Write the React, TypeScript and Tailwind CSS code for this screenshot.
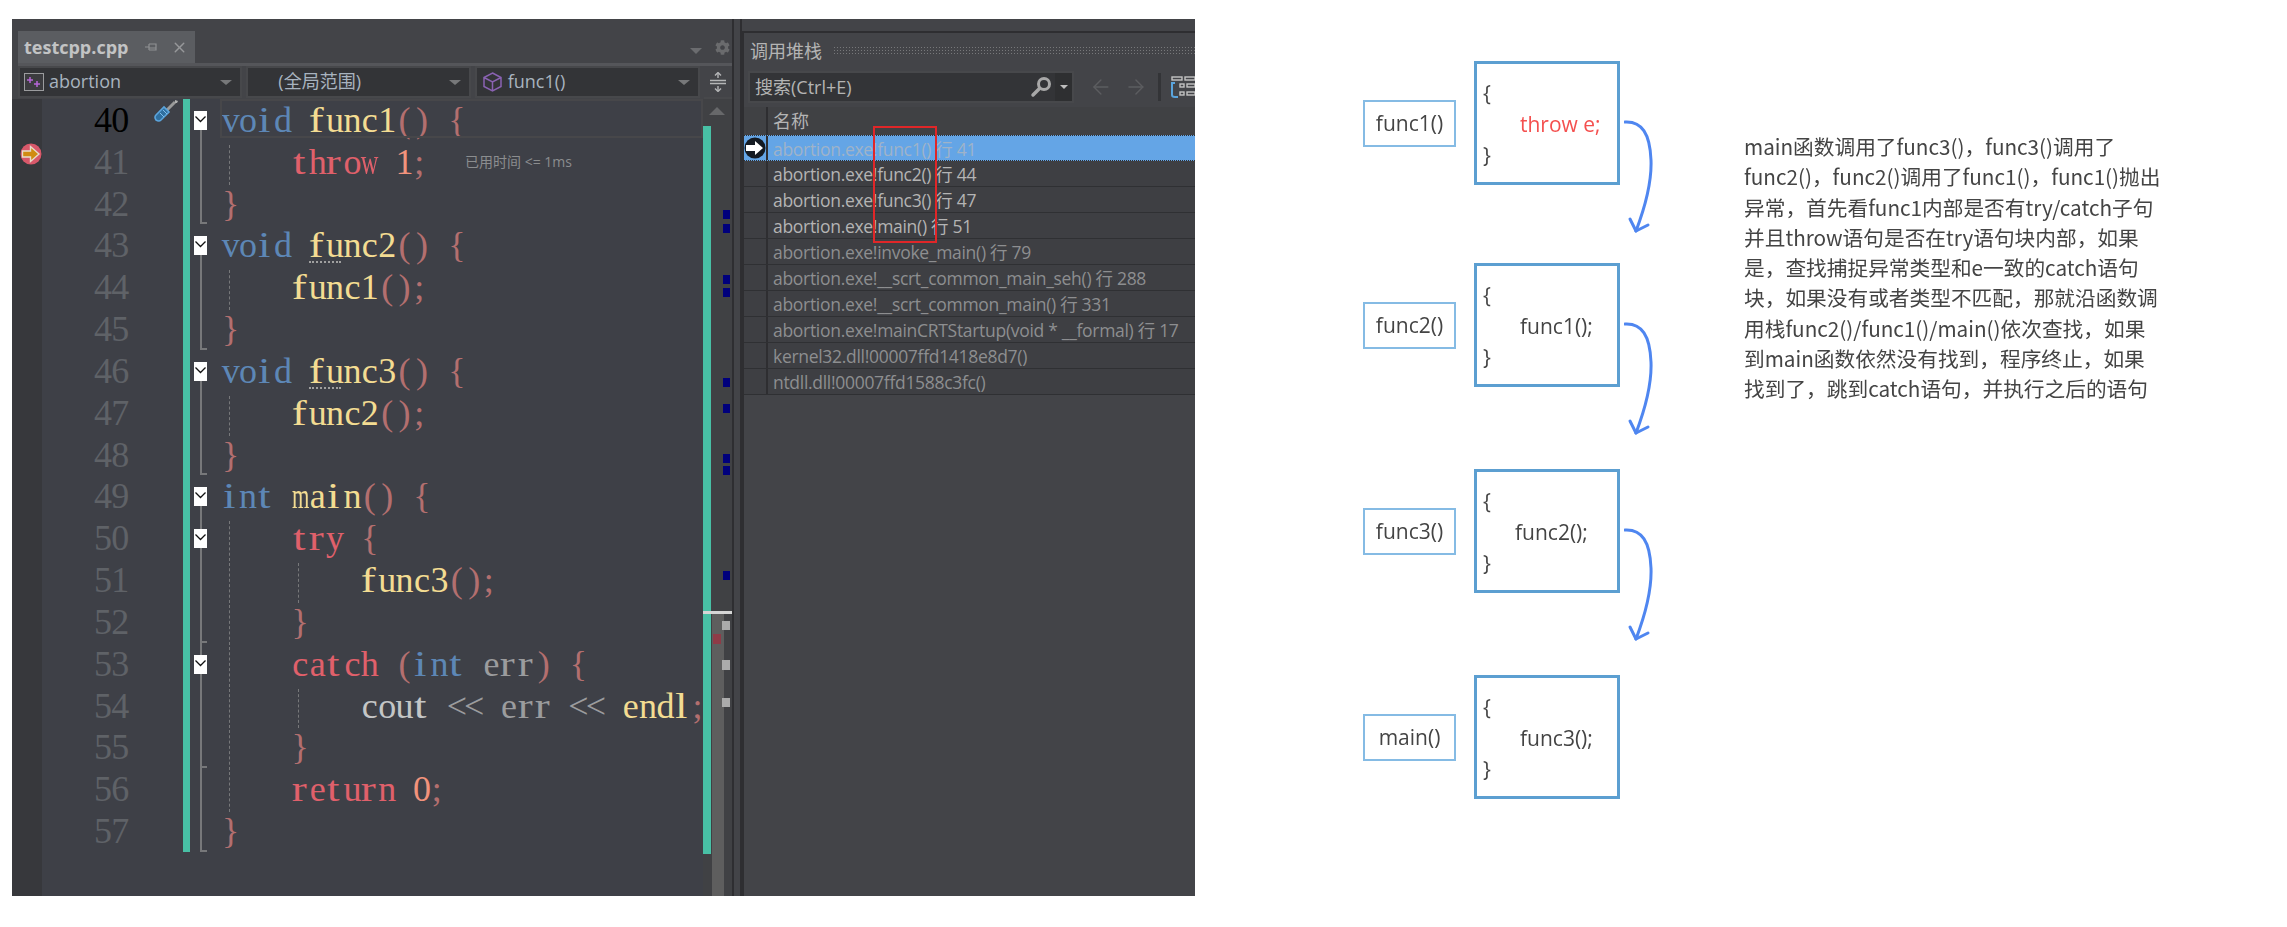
import { ArrowLeft, ArrowRight, X } from 'lucide-react'
import { FaCog } from 'react-icons/fa'

type Token = [string, string]
type Fold = 'open' | 'cont' | 'line' | 'tick' | 'end' | 'none'

const KW = 'text-[#5d87b6]'
const FN = 'text-[#f3dc92]'
const CTL = 'text-[#e0606b]'
const PUN = 'text-[#b36f6f]'
const NUM = 'text-[#f2937c]'
const VAR = 'text-[#9b9c9e]'
const STD = 'text-[#c4c6c6]'

const lines: { n: number; fold: Fold; tokens: Token[]; guides?: number[]; dots?: boolean }[] = [
  { n: 40, fold: 'open', dots: true, tokens: [['void ', KW], ['func1', FN], ['() {', PUN]] },
  { n: 41, fold: 'line', guides: [19], tokens: [['    ', VAR], ['throw ', CTL], ['1', NUM], [';', PUN]] },
  { n: 42, fold: 'end', tokens: [['}', PUN]] },
  { n: 43, fold: 'open', dots: true, tokens: [['void ', KW], ['func2', FN], ['() {', PUN]] },
  { n: 44, fold: 'line', guides: [19], tokens: [['    ', VAR], ['func1', FN], ['();', PUN]] },
  { n: 45, fold: 'end', tokens: [['}', PUN]] },
  { n: 46, fold: 'open', dots: true, tokens: [['void ', KW], ['func3', FN], ['() {', PUN]] },
  { n: 47, fold: 'line', guides: [19], tokens: [['    ', VAR], ['func2', FN], ['();', PUN]] },
  { n: 48, fold: 'end', tokens: [['}', PUN]] },
  { n: 49, fold: 'open', tokens: [['int ', KW], ['main', FN], ['() {', PUN]] },
  { n: 50, fold: 'cont', guides: [19], tokens: [['    ', VAR], ['try ', CTL], ['{', PUN]] },
  { n: 51, fold: 'line', guides: [19, 88], tokens: [['        ', VAR], ['func3', FN], ['();', PUN]] },
  { n: 52, fold: 'tick', guides: [19], tokens: [['    ', VAR], ['}', PUN]] },
  { n: 53, fold: 'cont', guides: [19], tokens: [['    ', VAR], ['catch ', CTL], ['(', PUN], ['int ', KW], ['err', VAR], [') {', PUN]] },
  { n: 54, fold: 'line', guides: [19, 88], tokens: [['        ', VAR], ['cout ', STD], ['<< ', VAR], ['err ', VAR], ['<< ', VAR], ['endl', FN], [';', PUN]] },
  { n: 55, fold: 'tick', guides: [19], tokens: [['    ', VAR], ['}', PUN]] },
  { n: 56, fold: 'line', guides: [19], tokens: [['    ', VAR], ['return ', CTL], ['0', NUM], [';', PUN]] },
  { n: 57, fold: 'end', tokens: [['}', PUN]] },
]

const stack = [
  'abortion.exe!func1() 行 41',
  'abortion.exe!func2() 行 44',
  'abortion.exe!func3() 行 47',
  'abortion.exe!main() 行 51',
  'abortion.exe!invoke_main() 行 79',
  'abortion.exe!__scrt_common_main_seh() 行 288',
  'abortion.exe!__scrt_common_main() 行 331',
  'abortion.exe!mainCRTStartup(void * __formal) 行 17',
  'kernel32.dll!00007ffd1418e8d7()',
  'ntdll.dll!00007ffd1588c3fc()',
]

const blueMarks = ['mt-[111px]', 'mt-[5px]', 'mt-[42px]', 'mt-[4px]', 'mt-[81px]', 'mt-[17px]', 'mt-[41px]', 'mt-[3px]', 'mt-[96px]']

const notes = [
  'main函数调用了func3()，func3()调用了',
  'func2()，func2()调用了func1()，func1()抛出',
  '异常，首先看func1内部是否有try/catch子句',
  '并且throw语句是否在try语句块内部，如果',
  '是，查找捕捉异常类型和e一致的catch语句',
  '块，如果没有或者类型不匹配，那就沿函数调',
  '用栈func2()/func1()/main()依次查找，如果',
  '到main函数依然没有找到，程序终止，如果',
  '找到了，跳到catch语句，并执行之后的语句',
]

// the reference font is monospaced, so every glyph sits in its own cell
function cellClass(ch: string) {
  if (ch === 'm') return 'w-[17.4px] scale-x-[0.62]'
  if (ch === 'w') return 'w-[17.4px] scale-x-[0.68]'
  if ('iltfrj'.includes(ch)) return 'w-[17.4px] -translate-x-[1.5px] scale-x-[1.25]'
  if (ch === ';') return 'w-[12px]'
  return 'w-[17.4px]'
}

function CodeText({ tokens }: { tokens: Token[] }) {
  return (
    <>
      {tokens.map(([text, color], i) => (
        <span key={i} className={color}>
          {text.split('').map((ch, j) => (
            <span key={j} className={`inline-flex justify-center ${cellClass(ch)}`}>
              {ch === ' ' ? '\u00a0' : ch}
            </span>
          ))}
        </span>
      ))}
    </>
  )
}

function FoldCell({ kind }: { kind: Fold }) {
  if (kind === 'none') return <div className="w-[20px]" />
  const marker = kind === 'open' || kind === 'cont'
  return (
    <div className="relative h-full w-[20px]">
      <div
        className={`absolute left-[10px] w-[2px] bg-[#77787a] ${kind === 'open' ? 'top-1/2 bottom-0' : 'top-0 bottom-0'}`}
      />
      {(kind === 'tick' || kind === 'end') && (
        <div className="absolute bottom-0 left-[10px] h-[2px] w-[7px] bg-[#77787a]" />
      )}
      {marker && (
        <svg width="13" height="19" viewBox="0 0 13 19" className="absolute top-[12px] left-[4px] bg-white">
          <path d="M1.5 5.5l5 5 5-5" fill="none" stroke="#111" strokeWidth="1.3" />
        </svg>
      )}
    </div>
  )
}

function BreakArrow() {
  return (
    <svg width="22" height="22" viewBox="0 0 22 22" className="absolute top-[2px] left-[8px]">
      <circle cx="11" cy="11" r="10.5" fill="#d8586a" />
      <path d="M2.5 8h8V3.5L19 11l-8.5 7.5V14h-8z" fill="#d08c12" stroke="#e6dccb" strokeWidth="1.4" />
    </svg>
  )
}

function Screwdriver() {
  return (
    <svg width="25" height="25" viewBox="0 0 25 25" className="absolute top-[0px] left-[25px]">
      <path d="M13 11l8-8" stroke="#9a9a9a" strokeWidth="3" />
      <path d="M21 1l3 1-1 2-2 0z" fill="#b0b0b0" />
      <path d="M2 16l8-8 5 5-8 8q-2 2-5 0-2-3 0-5z" fill="#2f6f9f" stroke="#5ba4dc" strokeWidth="1.6" />
      <path d="M6 14l4 4M9 11l4 4" stroke="#7fbcea" strokeWidth="1" />
    </svg>
  )
}

function CodeRow({ line }: { line: (typeof lines)[number] }) {
  return (
    <div className="flex h-[41.83px] items-center">
      <div className="relative h-full w-[30px] shrink-0 bg-[#37383c]">{line.n === 41 && <BreakArrow />}</div>
      <div
        className={`w-[87px] shrink-0 text-right ${line.n === 40 ? 'text-black' : 'text-[#5f6267]'}`}
      >
        <CodeText tokens={[[String(line.n), '']]} />
      </div>
      <div className="relative h-full w-[54px] shrink-0">{line.n === 40 && <Screwdriver />}</div>
      <div className="h-full w-[7px] shrink-0 bg-[#48c0a5]" />
      <FoldCell kind={line.fold} />
      <div className="relative flex h-full min-w-0 flex-1 items-center pl-[12px] whitespace-nowrap">
        {line.guides?.map((g) => (
          <div
            key={g}
            className="absolute top-[4px] bottom-[-2px] border-l border-dashed border-[#77787a]"
            style={{ left: g }}
          />
        ))}
        <CodeText tokens={line.tokens} />
        {line.dots && (
          <div className="absolute top-[37px] left-[99px] w-[32px] border-t-2 border-dotted border-[#a0a0a0]" />
        )}
        {line.n === 40 && (
          <div className="absolute top-0 right-0 left-[10px] h-[39px] border-2 border-[#47474a]" />
        )}
        {line.n === 41 && (
          <span className="absolute left-[255px] text-[14px] text-[#8b8d8f] font-['Open_Sans','Noto_Sans_CJK_SC',sans-serif]">
            已用时间 &lt;= 1ms
          </span>
        )}
      </div>
    </div>
  )
}

function Dropdown({ width, icon, label, indent }: { width: string; icon?: React.ReactNode; label: string; indent?: string }) {
  return (
    <div className={`flex h-[32px] items-center border-2 border-[#47484b] bg-[#333437] pr-[8px] ${width}`}>
      <div className={`flex flex-1 items-center gap-[5px] pb-[2px] pl-[4px] text-[18px] text-[#a8b3bf] ${indent ?? ''}`}>
        {icon}
        <span>{label}</span>
      </div>
      <div className="h-0 w-0 border-x-[6px] border-t-[5px] border-x-transparent border-t-[#77787a]" />
    </div>
  )
}

function Editor() {
  return (
    <div className="flex h-full w-[720px] shrink-0 flex-col">
      <div className="flex h-[44px] shrink-0 items-end justify-between pl-[6px]">
        <div className="flex h-[32px] w-[177px] items-center bg-[#5b5d61] pl-[6px] text-[#c2c3c4]">
          <span className="text-[18px] font-bold">testcpp.cpp</span>
          <svg width="14" height="14" viewBox="0 0 14 14" className="ml-[16px]">
            <path d="M1 7h4M5 4v6M5 4h7v6H5M5 8h7" stroke="#8f9193" strokeWidth="1.2" fill="none" />
          </svg>
          <X size={17} strokeWidth={2} className="ml-[13px] text-[#97989a]" />
        </div>
        <div className="flex items-center gap-[13px] pr-[2px] pb-[8px]">
          <div className="mt-[6px] h-0 w-0 border-x-[6px] border-t-[6px] border-x-transparent border-t-[#6b6c6f]" />
          <FaCog size={15} className="text-[#6a6b6d]" />
        </div>
      </div>
      <div className="ml-[6px] h-[3px] shrink-0 bg-[#55565a]" />
      <div className="flex h-[33px] shrink-0 gap-[4px] pl-[6px]">
        <Dropdown
          width="w-[225px]"
          label="abortion"
          icon={
            <svg width="20" height="18" viewBox="0 0 20 18" className="mt-[2px]">
              <rect x="0.5" y="0.5" width="19" height="17" fill="#3c3c3f" stroke="#9b9c9e" />
              <path d="M6 4v6M3 7h6M13 8v6M10 11h6" stroke="#b565d8" strokeWidth="1.5" />
            </svg>
          }
        />
        <Dropdown width="w-[225px]" label="(全局范围)" indent="pl-[30px]" />
        <Dropdown
          width="w-[226px]"
          label="func1()"
          indent="pl-[6px]"
          icon={
            <svg width="19" height="20" viewBox="0 0 19 20" className="mt-[2px] mr-[1px]">
              <path d="M9.5 1L18 5.5v9L9.5 19 1 14.5v-9zM1 5.5l8.5 4.5L18 5.5M9.5 10v9" fill="none" stroke="#8a62b2" strokeWidth="1.5" />
            </svg>
          }
        />
        <div className="flex w-[28px] items-center justify-center border-b-2 border-[#47484b]">
          <svg width="16" height="20" viewBox="0 0 16 20">
            <path d="M0 8.5h16M0 11.5h16M8 1v5M8 14v5" stroke="#b5b6b7" strokeWidth="1.4" />
            <path d="M5 3.5L8 0.5l3 3M5 16.5l3 3 3-3" stroke="#b5b6b7" strokeWidth="1.4" fill="none" />
          </svg>
        </div>
      </div>
      <div className="flex min-h-0 flex-1 bg-[#3e4047] font-['Liberation_Serif',serif] text-[36px] leading-none">
        <div className="min-w-0 flex-1 overflow-hidden">
          {lines.map((line) => (
            <CodeRow key={line.n} line={line} />
          ))}
          <div className="h-[44px] w-[30px] bg-[#37383c]" />
        </div>
        <Scrollbar />
      </div>
    </div>
  )
}

function Scrollbar() {
  return (
    <div className="relative flex w-[29px] shrink-0 bg-[#404144]">
      <div className="mt-[27px] h-[728px] w-[8px] shrink-0 bg-[#48c0a5]" />
      <div className="flex flex-1 flex-col items-end pr-[2px]">
        {blueMarks.map((m, i) => (
          <div key={i} className={`h-[9px] w-[7px] shrink-0 bg-[#00007c] ${m}`} />
        ))}
      </div>
      <div className="absolute top-[8px] left-[6px] h-0 w-0 border-x-[8px] border-b-[8px] border-x-transparent border-b-[#67686a]" />
      <div className="absolute top-[514px] bottom-0 left-[9px] w-[12px] bg-[#5e5e5e]" />
      <div className="absolute top-[512px] left-0 h-[3px] w-full bg-[#d6d6d6]" />
      <div className="absolute top-[522px] left-[19px] h-[9px] w-[8px] bg-[#ababab]" />
      <div className="absolute top-[561px] left-[19px] h-[10px] w-[8px] bg-[#ababab]" />
      <div className="absolute top-[599px] left-[19px] h-[9px] w-[8px] bg-[#ababab]" />
      <div className="absolute top-[535px] left-[10px] h-[10px] w-[8px] bg-[#8f3b47]" />
    </div>
  )
}

function CallStack() {
  return (
    <div className="relative mt-[12px] min-w-0 flex-1 overflow-hidden border-t-2 border-l-2 border-[#2e2e31] text-[#b4b4b4] font-['Open_Sans','Noto_Sans_CJK_SC',sans-serif]">
      <div className="flex h-[38px] items-center pb-[4px] pl-[6px]">
        <span className="font-['Noto_Sans_CJK_SC',sans-serif] text-[18px]">调用堆栈</span>
        <div className="ml-[11px] h-[8px] flex-1 bg-[radial-gradient(#77787a_1px,transparent_1px)] bg-[length:3px_3px]" />
      </div>
      <div className="flex h-[32px] items-center pl-[4px]">
        <div className="flex h-full w-[329px] items-center border-2 border-[#47484b] bg-[#333437]">
          <span className="flex-1 pl-[5px] text-[18px] text-[#b4b4b4]">搜索(Ctrl+E)</span>
          <svg width="22" height="22" viewBox="0 0 22 22" className="mr-[3px]">
            <circle cx="14" cy="8" r="5.5" fill="none" stroke="#a8a8a8" strokeWidth="3" />
            <path d="M9.5 12.5L3 19" stroke="#a8a8a8" strokeWidth="3.5" strokeLinecap="round" />
          </svg>
          <div className="flex h-full w-[17px] items-center justify-center bg-[#2e2f31]">
            <div className="h-0 w-0 border-x-[4px] border-t-[4px] border-x-transparent border-t-[#bdbdbd]" />
          </div>
        </div>
        <ArrowLeft size={24} strokeWidth={1.4} className="ml-[15px] text-[#5c5d60]" />
        <ArrowRight size={24} strokeWidth={1.4} className="ml-[11px] text-[#5c5d60]" />
        <div className="ml-[10px] h-[28px] w-[3px] bg-[#333437]" />
        <svg width="24" height="22" viewBox="0 0 24 22" className="ml-[10px] shrink-0">
          <rect x="1" y="1" width="10" height="3" fill="none" stroke="#c4c4c4" strokeWidth="1.4" />
          <rect x="14" y="1" width="10" height="3" fill="none" stroke="#c4c4c4" strokeWidth="1.4" />
          <path d="M4 7h-3v12q0 2 3 2h3" fill="none" stroke="#5aa4dc" strokeWidth="2" />
          <rect x="9" y="8" width="4" height="3" fill="none" stroke="#c4c4c4" strokeWidth="1.4" />
          <rect x="16" y="8" width="8" height="3" fill="none" stroke="#c4c4c4" strokeWidth="1.4" />
          <rect x="9" y="16" width="4" height="3" fill="none" stroke="#c4c4c4" strokeWidth="1.4" />
          <rect x="16" y="16" width="8" height="3" fill="none" stroke="#c4c4c4" strokeWidth="1.4" />
        </svg>
      </div>
      <div className="mt-[4px] flex h-[28px] bg-[#404144]">
        <div className="w-[24px] border-r-2 border-[#2e2e31]" />
        <span className="pl-[5px] text-[18px] leading-[28px] text-[#b4b4b4]">名称</span>
      </div>
      {stack.map((row, i) => (
        <div
          key={row}
          className={`flex h-[26px] items-center border-b border-[#2f3033] ${i === 0 ? 'border-t border-dotted border-[#1f2a36] bg-[#64a5e6]' : 'bg-[#3e3f43]'}`}
        >
          <div className="flex h-full w-[24px] shrink-0 items-center justify-center border-r-2 border-[#2e2e31]">
            {i === 0 && (
              <svg width="22" height="22" viewBox="0 0 22 22">
                <circle cx="11" cy="11" r="10.5" fill="#141a22" />
                <path d="M2 8h9V4l8 7-8 7v-4H2z" fill="#fff" />
              </svg>
            )}
          </div>
          <span
            className={`pt-[2px] pl-[5px] text-[17.5px] tracking-[-0.3px] whitespace-nowrap ${i === 0 ? 'text-[#9fb3c9]' : i < 4 ? 'text-[#b4b4b4]' : 'text-[#8d8e90]'}`}
          >
            {row}
          </span>
        </div>
      ))}
      <div className="absolute top-[93px] left-[129px] h-[117px] w-[64px] border-2 border-[#e02628]" />
    </div>
  )
}

function CurvedArrow() {
  return (
    <svg width="40" height="116" viewBox="0 0 40 116" className="absolute top-[59px] left-[261px]" fill="none">
      <path d="M1 2C18 1 26 14 27 40 28 65 20 90 12 111" stroke="#4f86f0" strokeWidth="3" strokeLinecap="round" />
      <path d="M6 99l6 12 12-6" stroke="#4f86f0" strokeWidth="3" strokeLinecap="round" strokeLinejoin="round" />
    </svg>
  )
}

function CallBox({ name, code, red, indent, arrow, top }: { name: string; code: string; red?: boolean; indent: string; arrow?: boolean; top: string }) {
  return (
    <div className={`relative flex items-center ${top}`}>
      <div className="flex h-[47px] w-[93px] items-center justify-center border-2 border-[#85bbe4] pt-[2px]">{name}</div>
      <div className="ml-[18px] flex h-[124px] w-[146px] flex-col justify-center border-[3px] border-[#5c9fd1] pt-[3px] pl-[6px] leading-[31px]">
        <div>{'{'}</div>
        <div className={`${indent} ${red ? 'text-[#f4504f]' : ''}`}>{code}</div>
        <div>{'}'}</div>
      </div>
      {arrow && <CurvedArrow />}
    </div>
  )
}

export default function App() {
  return (
    <div className="flex h-[927px] w-[2287px] overflow-hidden bg-white">
      <div className="mt-[19px] ml-[12px] flex h-[877px] w-[1183px] shrink-0 bg-[#434448] font-['Open_Sans','Noto_Sans_CJK_SC',sans-serif]">
        <Editor />
        <div className="h-full w-[10px] shrink-0 border-x-2 border-[#2e2e31]" />
        <CallStack />
      </div>
      <div className="ml-[168px] w-[381px] shrink-0 pt-[61px] font-['Open_Sans',sans-serif] text-[21px] text-[#444] blur-[0.4px]">
        <CallBox name="func1()" code="throw e;" red indent="pl-[37px]" arrow top="" />
        <CallBox name="func2()" code="func1();" indent="pl-[37px]" arrow top="mt-[78px]" />
        <CallBox name="func3()" code="func2();" indent="pl-[32px]" arrow top="mt-[82px]" />
        <CallBox name="main()" code="func3();" indent="pl-[37px]" top="mt-[82px]" />
      </div>
      <div className="pt-[131px] font-['Noto_Sans_CJK_SC',sans-serif] text-[20.7px] leading-[30.3px] whitespace-nowrap text-[#444] blur-[0.4px]">
        {notes.map((n) => (
          <div key={n}>{n}</div>
        ))}
      </div>
    </div>
  )
}
